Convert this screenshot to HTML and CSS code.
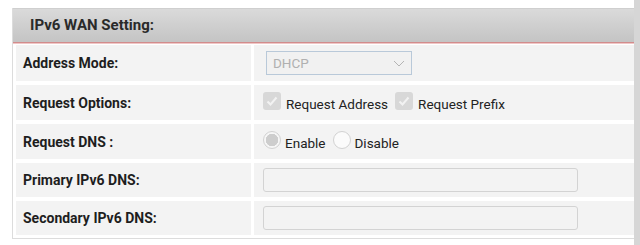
FILE: index.html
```html
<!DOCTYPE html>
<html lang="en">
<head>
  <meta charset="UTF-8" />
  <title>IPv6 WAN Setting</title>
  <link rel="stylesheet" href="styles.css">
</head>
<body>
  <div class="page">
    <div class="panel">
      <div class="panel-title">IPv6 WAN Setting:</div>

      <div class="form-grid">
        <!-- Address mode -->
        <div class="cell label">Address Mode:</div>
        <div class="cell value">
          <span class="select-wrap">
            <select class="select" disabled>
              <option>DHCP</option>
            </select>
            <svg class="chevron" width="12" height="7" viewBox="0 0 12 7">
              <path d="M1 1 L6 6 L11 1" fill="none" stroke="#b4b4b4" stroke-width="1" />
            </svg>
          </span>
        </div>

        <!-- Request options -->
        <div class="cell label">Request Options:</div>
        <div class="cell value">
          <span class="check">
            <svg width="14" height="14" viewBox="0 0 14 14">
              <path d="M2.5 7.5 L5.5 10.5 L11.5 3.5" fill="none" stroke="#f2f2f2" stroke-width="2" />
            </svg>
          </span>
          <span class="opt-text">Request Address</span>
          <span class="check check-next">
            <svg width="14" height="14" viewBox="0 0 14 14">
              <path d="M2.5 7.5 L5.5 10.5 L11.5 3.5" fill="none" stroke="#f2f2f2" stroke-width="2" />
            </svg>
          </span>
          <span class="opt-text">Request Prefix</span>
        </div>

        <!-- Request DNS -->
        <div class="cell label">Request DNS :</div>
        <div class="cell value">
          <span class="radio radio-on"></span>
          <span class="opt-text">Enable</span>
          <span class="radio radio-next"></span>
          <span class="opt-text">Disable</span>
        </div>

        <!-- DNS servers -->
        <div class="cell label">Primary IPv6 DNS:</div>
        <div class="cell value">
          <input type="text" class="text-input" disabled />
        </div>

        <div class="cell label">Secondary IPv6 DNS:</div>
        <div class="cell value">
          <input type="text" class="text-input" disabled />
        </div>
      </div>
    </div>
  </div>
  <div class="side-bar"></div>
</body>
</html>
```

FILE: styles.css
```css
* {
  margin: 0;
  padding: 0;
  box-sizing: border-box;
}

body {
  font-family: Roboto, 'Liberation Sans', sans-serif;
  background: #fff;
  color: #222;
  display: flex;
  width: 640px;
  height: 245px;
  overflow: hidden;
}

.page {
  flex: 1;
  overflow: hidden;
  padding: 8px 0 0 12px;
}

.side-bar {
  width: 6px;
  background: #d6d6d6;
}

.panel {
  width: 640px;
  border: 1px solid #dcdcdc;
  border-top: none;
}

.panel-title {
  height: 35px;
  padding: 0 0 0 17px;
  line-height: 33px;
  font-size: 15px;
  font-weight: bold;
  color: #2a2a2a;
  background: linear-gradient(#dadada, #c4c4c4);
  border-top: 1px solid #cfcfcf;
  border-bottom: 1px solid #d28c8c;
  box-shadow: 0 1px 0 #efc6c6;
}

.form-grid {
  display: grid;
  grid-template-columns: 235px 1fr;
  grid-template-rows: 36px 35px 35px 34px 34px;
  column-gap: 3px;
  row-gap: 4px;
  padding: 2px 3px 3px 3px;
}

.cell {
  background: #f3f3f3;
  display: flex;
  align-items: center;
}

.label {
  padding-left: 7px;
  font-size: 14px;
  font-weight: bold;
  color: #1e1e1e;
}

.value {
  padding-left: 9px;
  font-size: 13.5px;
  color: #222;
}

.select-wrap {
  position: relative;
  margin-left: 3px;
  display: inline-block;
}

.select {
  -webkit-appearance: none;
  appearance: none;
  width: 146px;
  height: 24px;
  padding-left: 6px;
  font-family: Roboto, 'Liberation Sans', sans-serif;
  font-size: 13.5px;
  color: #b0b0b0;
  background: #f1f1f1;
  border: 1px solid #b9c9d9;
  border-radius: 0;
  opacity: 1;
}

.chevron {
  position: absolute;
  right: 7px;
  top: 9px;
}

.check {
  width: 18px;
  height: 18px;
  border-radius: 3px;
  background: #d8d8d8;
  display: inline-flex;
  align-items: center;
  justify-content: center;
  margin-right: 5px;
  margin-top: -3px;
}

.check-next {
  margin-left: 7px;
}

.opt-text {
  line-height: 18px;
  margin-top: 3px;
}

.radio {
  width: 18px;
  height: 18px;
  border-radius: 50%;
  border: 1px solid #d2d2d2;
  background: #fbfbfb;
  margin-right: 4px;
  margin-top: -3px;
  display: inline-block;
}

.radio-on {
  background: radial-gradient(circle, #cdcdcd 0, #cdcdcd 6px, #f6f6f6 6.5px);
}

.radio-next {
  margin-left: 7px;
}

.text-input {
  width: 315px;
  height: 24px;
  border: 1px solid #d3d3d3;
  border-radius: 3px;
  background: #f3f3f3;
}
```
